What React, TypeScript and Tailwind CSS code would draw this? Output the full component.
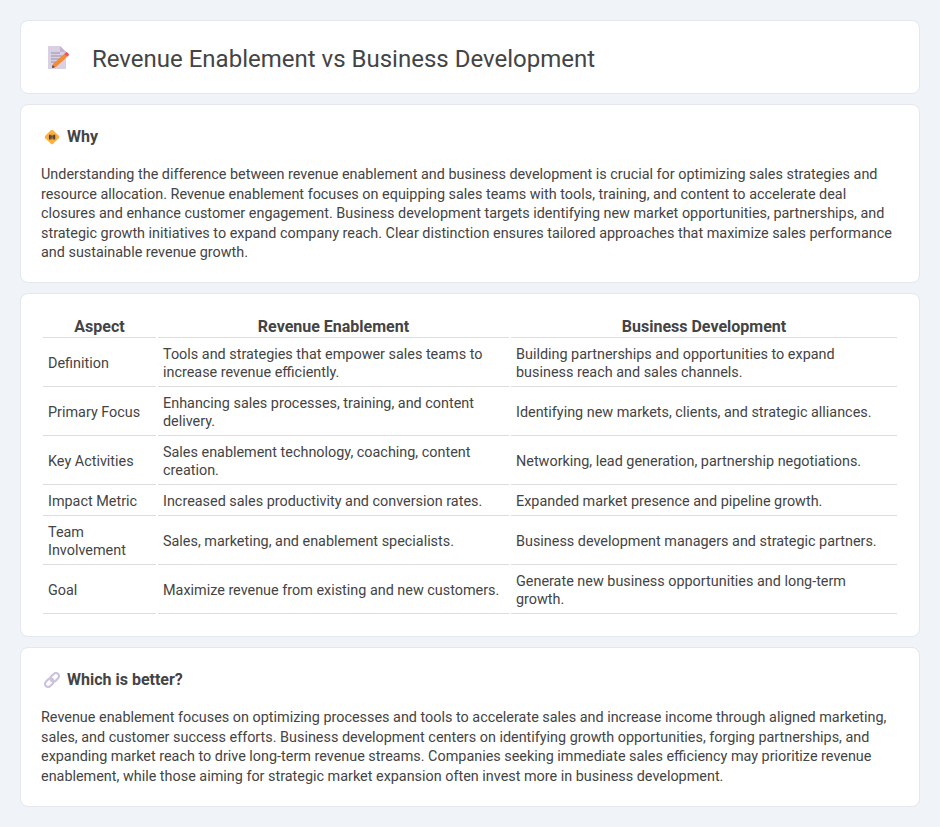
const rows: [string, string, string][] = [
  ["Definition", "Tools and strategies that empower sales teams to increase revenue efficiently.", "Building partnerships and opportunities to expand business reach and sales channels."],
  ["Primary Focus", "Enhancing sales processes, training, and content delivery.", "Identifying new markets, clients, and strategic alliances."],
  ["Key Activities", "Sales enablement technology, coaching, content creation.", "Networking, lead generation, partnership negotiations."],
  ["Impact Metric", "Increased sales productivity and conversion rates.", "Expanded market presence and pipeline growth."],
  ["Team Involvement", "Sales, marketing, and enablement specialists.", "Business development managers and strategic partners."],
  ["Goal", "Maximize revenue from existing and new customers.", "Generate new business opportunities and long-term growth."],
];

function DocIcon() {
  return (
    <svg width="24" height="24" viewBox="0 0 24 24" className="block">
      <path d="M2 1h12l6 6v17H2z" fill="#d9d0e3" />
      <path d="M14 1l6 6h-6z" fill="#bfb4cc" />
      <path d="M5 8h9M5 11h11M5 14h9M5 17h5" stroke="#9a90a8" strokeWidth="1" fill="none" />
      <path d="M7 19L18 9l3 3-11 10-4 1z" fill="#f58a33" />
      <path d="M18 9l1.6-1.5a1.2 1.2 0 0 1 1.7 0l1.3 1.3a1.2 1.2 0 0 1 0 1.7L21 12z" fill="#f2545b" />
      <path d="M6.5 20L6 23l3-.8z" fill="#5a4a42" />
    </svg>
  );
}

function DiamondIcon() {
  return (
    <svg width="16" height="16" viewBox="0 0 16 16" className="block">
      <rect x="2.4" y="2.4" width="11.2" height="11.2" rx="1.6" transform="rotate(45 8 8)" fill="#fbb040" />
      <path d="M5.6 5.8v4.6M7 5.8v4.6M9.2 5.8v4.6M10.6 5.8v4.6M4.8 8h6.4" stroke="#4f4038" strokeWidth="1.2" fill="none" />
    </svg>
  );
}

function LinkIcon() {
  return (
    <svg width="16" height="16" viewBox="0 0 16 16" className="block">
      <g transform="rotate(-45 8 8)" fill="none" stroke="#cbc2dc" strokeWidth="2.2">
        <rect x="-0.6" y="4.9" width="9.6" height="6.2" rx="3.1" />
        <rect x="7" y="4.9" width="9.6" height="6.2" rx="3.1" />
      </g>
    </svg>
  );
}

export default function App() {
  return (
    <div className="min-h-[827px] bg-[#f0f3f8] p-5 text-[#444444] font-['Roboto',sans-serif]">
      <div className="flex flex-col gap-2.5">
        <header className="flex h-[74px] items-center gap-[22px] rounded-lg border border-[#e4e7ef] bg-white pl-[25px]">
          <DocIcon />
          <h1 className="mt-[3px] text-2xl font-normal leading-7 text-[#444444]">Revenue Enablement vs Business Development</h1>
        </header>

        <section className="h-[179px] rounded-lg border border-[#e4e7ef] bg-white px-5 pt-[22px]">
          <div className="flex items-center gap-[7px] pl-[3px]">
            <DiamondIcon />
            <h2 className="text-base font-bold leading-[20px]">Why</h2>
          </div>
          <p className="mt-[18px] text-[14.4px] leading-[19.6px] text-[#444444]">
            Understanding the difference between revenue enablement and business development is crucial for optimizing sales strategies and resource allocation. Revenue enablement focuses on equipping sales teams with tools, training, and content to accelerate deal closures and enhance customer engagement. Business development targets identifying new market opportunities, partnerships, and strategic growth initiatives to expand company reach. Clear distinction ensures tailored approaches that maximize sales performance and sustainable revenue growth.
          </p>
        </section>

        <section className="h-[344px] rounded-lg border border-[#e4e7ef] bg-white px-5 pt-[21px]">
          <table className="w-[858px] table-fixed border-separate border-spacing-[2px] text-[14.4px] leading-[18px]">
            <colgroup>
              <col className="w-[113px]" />
              <col className="w-[351px]" />
              <col />
            </colgroup>
            <thead>
              <tr>
                <th className="border-b border-[#dddddd] px-[5px] pt-[1px] pb-[1px] text-center text-base/[18px] font-bold">Aspect</th>
                <th className="border-b border-[#dddddd] px-[5px] pt-[1px] pb-[1px] text-center text-base/[18px] font-bold">Revenue Enablement</th>
                <th className="border-b border-[#dddddd] px-[5px] pt-[1px] pb-[1px] text-center text-base/[18px] font-bold">Business Development</th>
              </tr>
            </thead>
            <tbody>
              {rows.map((r) => (
                <tr key={r[0]}>
                  <td className="border-b border-[#dddddd] px-[5px] pt-[6px] pb-[4px]">{r[0]}</td>
                  <td className="border-b border-[#dddddd] px-[5px] pt-[6px] pb-[4px]">{r[1]}</td>
                  <td className="border-b border-[#dddddd] px-[5px] pt-[6px] pb-[4px]">{r[2]}</td>
                </tr>
              ))}
            </tbody>
          </table>
        </section>

        <section className="h-[160px] rounded-lg border border-[#e4e7ef] bg-white px-5 pt-[22px]">
          <div className="flex items-center gap-[7px] pl-[3px]">
            <LinkIcon />
            <h2 className="text-base font-bold leading-[20px]">Which is better?</h2>
          </div>
          <p className="mt-[18px] text-[14.4px] leading-[19.6px] text-[#444444]">
            Revenue enablement focuses on optimizing processes and tools to accelerate sales and increase income through aligned marketing, sales, and customer success efforts. Business development centers on identifying growth opportunities, forging partnerships, and expanding market reach to drive long-term revenue streams. Companies seeking immediate sales efficiency may prioritize revenue enablement, while those aiming for strategic market expansion often invest more in business development.
          </p>
        </section>
      </div>
    </div>
  );
}
